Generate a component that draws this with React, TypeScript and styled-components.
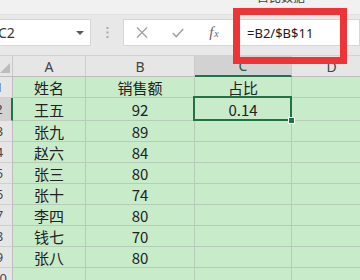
import styled, { createGlobalStyle } from "styled-components";

const GlobalStyle = createGlobalStyle`
    html, body {
        margin: 0;
        padding: 0;
        background: #e8e8e8;
    }
    body {
        font-family: "Noto Sans", "Noto Sans CJK SC", sans-serif;
    }
`

const columns = ['A', 'B', 'C', 'D']

// linhas da planilha: nome, vendas, proporção
const rows: Array<Array<string>> = [
    ['姓名', '销售额', '占比'],
    ['王五', '92', '0.14'],
    ['张九', '89', ''],
    ['赵六', '84', ''],
    ['张三', '80', ''],
    ['张十', '74', ''],
    ['李四', '80', ''],
    ['钱七', '70', ''],
    ['张八', '80', ''],
    ['', '', ''],
]

const selectedRow = 1
const selectedCol = 2

function App() {

    const returnHeaderRow = () => {
        return <>
            <Corner />
            {columns.map((col, i) => (
                <ColHeader key={col} $selected={i === selectedCol}>{col}</ColHeader>
            ))}
        </>
    }

    const returnRow = (row: Array<string>, r: number) => {
        return [
            <RowHeader key={`h${r}`} $selected={r === selectedRow}>{r + 1}</RowHeader>,
            ...row.map((value, c) => (
                <Cell key={`c${r}-${c}`} $selected={r === selectedRow && c === selectedCol}>{value}</Cell>
            )),
            <Cell key={`d${r}`} $selected={false} />
        ]
    }

    return (
        <>
            <GlobalStyle />
            <Window>
                <TitleBar>
                    <Title>占比数据</Title>
                </TitleBar>
                <FormulaBar>
                    <NameBox>
                        C2
                        <DropArrow />
                    </NameBox>
                    <Separator>
                        <svg width="3" height="11" viewBox="0 0 3 11">
                            <rect x="0.5" y="0" width="2" height="2" fill="#a8a8a8" />
                            <rect x="0.5" y="4.5" width="2" height="2" fill="#a8a8a8" />
                            <rect x="0.5" y="9" width="2" height="2" fill="#a8a8a8" />
                        </svg>
                    </Separator>
                    <ButtonGroup>
                        <IconSlot>
                            <svg width="12" height="11" viewBox="0 0 12 11">
                                <path d="M1 0.5 L11 10.5 M11 0.5 L1 10.5" stroke="#a2a2a2" strokeWidth="1.4" fill="none" />
                            </svg>
                        </IconSlot>
                        <IconSlot>
                            <svg width="12" height="10" viewBox="0 0 12 10">
                                <path d="M0.8 5 L4.3 8.6 L11.2 1" stroke="#a2a2a2" strokeWidth="1.5" fill="none" />
                            </svg>
                        </IconSlot>
                        <IconSlot>
                            <Fx>f<small>x</small></Fx>
                        </IconSlot>
                    </ButtonGroup>
                    <FormulaInput>=B2/$B$11</FormulaInput>
                </FormulaBar>
                <Sheet>
                    {returnHeaderRow()}
                    {rows.map((row, r) => returnRow(row, r))}
                </Sheet>
                <Highlight />
            </Window>
        </>
    )
}

export default App

const Window = styled.div`
    position: relative;
    width: 360px;
    height: 280px;
    overflow: hidden;
    background: #e8e8e8;
`

const TitleBar = styled.div`
    height: 15px;
    overflow: hidden;
    background: #f1f1f1;
    border-bottom: 1px solid #e2e2e2;
    box-sizing: border-box;
    padding-left: 257px;
`

const Title = styled.div`
    margin-top: -10px;
    font-family: "Noto Sans CJK SC", sans-serif;
    font-size: 12px;
    line-height: 14px;
    color: #444;
`

const FormulaBar = styled.div`
    height: 40px;
    box-sizing: border-box;
    padding-top: 4px;
    display: flex;
    align-items: flex-start;
    background: #e8e8e8;
`

const NameBox = styled.div`
    flex: none;
    width: 99px;
    height: 27px;
    margin-left: -8px;
    box-sizing: border-box;
    padding-left: 5px;
    padding-right: 6px;
    display: flex;
    align-items: center;
    background: #ffffff;
    border: 1px solid #d6d6d6;
    font-size: 14px;
    color: #333;
`

const DropArrow = styled.span`
    margin-left: auto;
    width: 0;
    height: 0;
    border-left: 4px solid transparent;
    border-right: 4px solid transparent;
    border-top: 4px solid #5c5c5c;
`

const Separator = styled.div`
    flex: none;
    width: 32px;
    height: 27px;
    display: flex;
    align-items: center;
    justify-content: center;
`

const ButtonGroup = styled.div`
    flex: none;
    width: 111px;
    height: 27px;
    box-sizing: border-box;
    display: flex;
    background: #ffffff;
    border: 1px solid #d6d6d6;
    border-right: none;
`

const IconSlot = styled.div`
    width: 36px;
    display: flex;
    align-items: center;
    justify-content: center;
`

const Fx = styled.span`
    font-family: "Liberation Serif", serif;
    font-style: italic;
    font-size: 15px;
    color: #666;

    small {
        font-size: 10px;
        margin-left: 1px;
    }
`

const FormulaInput = styled.div`
    flex: 1;
    height: 27px;
    box-sizing: border-box;
    padding-left: 13px;
    display: flex;
    align-items: center;
    background: #ffffff;
    border: 1px solid #d6d6d6;
    border-left: none;
    font-size: 13px;
    color: #222;
`

const Sheet = styled.div`
    display: grid;
    grid-template-columns: 26px 73px 109px 97px 80px;
    grid-template-rows: 21px 21px 23px repeat(8, 21px);
    margin-left: -13px;
    border-top: 1px solid #d2d2d2;
`

const Corner = styled.div`
    position: relative;
    background: #e6e6e6;
    border-right: 1px solid #c8c8c8;
    border-bottom: 1px solid #bdbdbd;

    &::after {
        content: '';
        position: absolute;
        right: 2px;
        bottom: 3px;
        width: 10px;
        height: 10px;
        background: #bcbcbc;
        clip-path: polygon(100% 0, 100% 100%, 0 100%);
    }
`

const ColHeader = styled.div<{ $selected: boolean }>`
    display: flex;
    align-items: center;
    justify-content: center;
    background: ${props => props.$selected ? '#d2d2d2' : '#e6e6e6'};
    border-right: 1px solid #cbcbcb;
    border-bottom: ${props => props.$selected ? '2px solid #217346' : '1px solid #bdbdbd'};
    font-size: 14px;
    color: ${props => props.$selected ? '#1e5e38' : '#444'};
`

const RowHeader = styled.div<{ $selected: boolean }>`
    display: flex;
    align-items: center;
    justify-content: center;
    background: ${props => props.$selected ? '#d2d2d2' : '#e6e6e6'};
    border-right: ${props => props.$selected ? '2px solid #217346' : '1px solid #bdbdbd'};
    border-bottom: 1px solid #cfcfcf;
    font-size: 13px;
    color: #444;
`

const Cell = styled.div<{ $selected: boolean }>`
    position: ${props => props.$selected ? 'relative' : 'static'};
    display: flex;
    align-items: center;
    justify-content: center;
    background: #c8ebca;
    border-right: 1px solid #b5cdb7;
    border-bottom: 1px solid #b5cdb7;
    font-family: "Noto Sans CJK SC", sans-serif;
    font-size: 15px;
    color: #222;

    &::after {
        content: '';
        display: ${props => props.$selected ? 'block' : 'none'};
        position: absolute;
        top: -2px;
        left: -2px;
        right: -1px;
        bottom: -1px;
        border: 2px solid #217346;
    }

    &::before {
        content: '';
        display: ${props => props.$selected ? 'block' : 'none'};
        position: absolute;
        right: -4px;
        bottom: -4px;
        width: 5px;
        height: 5px;
        background: #217346;
        border: 1px solid #ffffff;
        z-index: 1;
    }
`

const Highlight = styled.div`
    position: absolute;
    left: 233px;
    top: 8px;
    width: 114px;
    height: 56px;
    box-sizing: border-box;
    border: 7px solid #ef3438;
`
